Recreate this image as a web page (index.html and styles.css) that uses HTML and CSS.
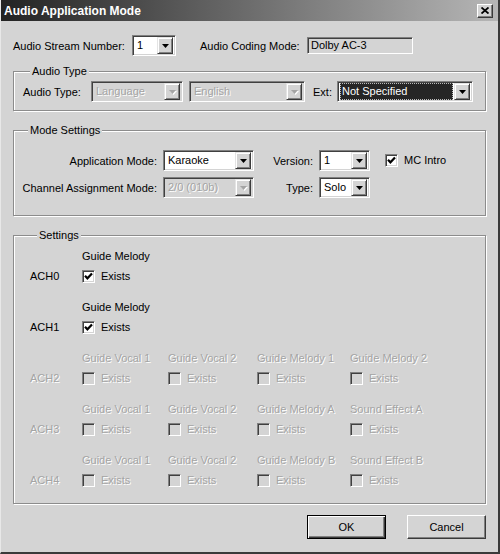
FILE: index.html
```html
<!DOCTYPE html>
<html lang="en">
<head>
    <meta charset="UTF-8">
    <title>Audio Application Mode</title>
    <link rel="stylesheet" href="styles.css">
</head>
<body>
<div class="window">
    <div class="titlebar">
        <span class="title">Audio Application Mode</span>
        <button class="close-btn">
            <svg width="8" height="7" viewBox="0 0 8 7"><path d="M0.5 0.5L7.5 6.5M7.5 0.5L0.5 6.5" stroke="#000" stroke-width="1.8" fill="none"/></svg>
        </button>
    </div>
    <div class="content">
        <div class="row top-row">
            <label class="lbl w-stream">Audio Stream Number:</label>
            <div class="combo w-44">
                <span class="combo-text">1</span>
                <span class="drop"><svg width="7" height="4" viewBox="0 0 7 4"><path d="M0 0h7L3.5 4z"/></svg></span>
            </div>
            <label class="lbl w-coding">Audio Coding Mode:</label>
            <div class="edit">Dolby AC-3</div>
        </div>

        <div class="group group-audio">
            <div class="group-title">Audio Type</div>
            <div class="row audio-row">
                <label class="lbl w-atype">Audio Type:</label>
                <div class="combo disabled w-lang">
                    <span class="combo-text">Language</span>
                    <span class="drop"><svg width="7" height="4" viewBox="0 0 7 4"><path d="M0 0h7L3.5 4z"/></svg></span>
                </div>
                <div class="combo disabled w-eng">
                    <span class="combo-text">English</span>
                    <span class="drop"><svg width="7" height="4" viewBox="0 0 7 4"><path d="M0 0h7L3.5 4z"/></svg></span>
                </div>
                <label class="lbl w-ext">Ext:</label>
                <div class="combo w-ext-combo">
                    <span class="combo-text selected">Not Specified</span>
                    <span class="drop"><svg width="7" height="4" viewBox="0 0 7 4"><path d="M0 0h7L3.5 4z"/></svg></span>
                </div>
            </div>
        </div>

        <div class="group group-mode">
            <div class="group-title">Mode Settings</div>
            <div class="row mode-row first">
                <label class="lbl right w-mode">Application Mode:</label>
                <div class="combo w-app">
                    <span class="combo-text">Karaoke</span>
                    <span class="drop"><svg width="7" height="4" viewBox="0 0 7 4"><path d="M0 0h7L3.5 4z"/></svg></span>
                </div>
                <label class="lbl right w-ver">Version:</label>
                <div class="combo w-small">
                    <span class="combo-text">1</span>
                    <span class="drop"><svg width="7" height="4" viewBox="0 0 7 4"><path d="M0 0h7L3.5 4z"/></svg></span>
                </div>
                <span class="checkbox mc-check">
                    <svg width="9" height="9" viewBox="0 0 9 9"><path d="M1 3.8L3.4 6.3L8 1.6" stroke="#000" stroke-width="2.2" fill="none"/></svg>
                </span>
                <span class="check-label">MC Intro</span>
            </div>
            <div class="row mode-row">
                <label class="lbl right w-mode">Channel Assignment Mode:</label>
                <div class="combo disabled w-app">
                    <span class="combo-text">2/0 (010b)</span>
                    <span class="drop"><svg width="7" height="4" viewBox="0 0 7 4"><path d="M0 0h7L3.5 4z"/></svg></span>
                </div>
                <label class="lbl right w-ver">Type:</label>
                <div class="combo w-small">
                    <span class="combo-text">Solo</span>
                    <span class="drop"><svg width="7" height="4" viewBox="0 0 7 4"><path d="M0 0h7L3.5 4z"/></svg></span>
                </div>
            </div>
        </div>

        <div class="group group-settings">
            <div class="group-title">Settings</div>
            <div class="ach-grid">
                <span class="ach">ACH0</span>
                <div class="cell">
                    <div class="cell-name">Guide Melody</div>
                    <div class="check-row"><span class="checkbox"><svg width="9" height="9" viewBox="0 0 9 9"><path d="M1 3.8L3.4 6.3L8 1.6" stroke="#000" stroke-width="2.2" fill="none"/></svg></span><span class="check-label">Exists</span></div>
                </div>
                <div></div><div></div><div></div>

                <span class="ach">ACH1</span>
                <div class="cell">
                    <div class="cell-name">Guide Melody</div>
                    <div class="check-row"><span class="checkbox"><svg width="9" height="9" viewBox="0 0 9 9"><path d="M1 3.8L3.4 6.3L8 1.6" stroke="#000" stroke-width="2.2" fill="none"/></svg></span><span class="check-label">Exists</span></div>
                </div>
                <div></div><div></div><div></div>

                <span class="ach off">ACH2</span>
                <div class="cell off">
                    <div class="cell-name">Guide Vocal 1</div>
                    <div class="check-row"><span class="checkbox"></span><span class="check-label">Exists</span></div>
                </div>
                <div class="cell off">
                    <div class="cell-name">Guide Vocal 2</div>
                    <div class="check-row"><span class="checkbox"></span><span class="check-label">Exists</span></div>
                </div>
                <div class="cell off">
                    <div class="cell-name">Guide Melody 1</div>
                    <div class="check-row"><span class="checkbox"></span><span class="check-label">Exists</span></div>
                </div>
                <div class="cell off">
                    <div class="cell-name">Guide Melody 2</div>
                    <div class="check-row"><span class="checkbox"></span><span class="check-label">Exists</span></div>
                </div>

                <span class="ach off">ACH3</span>
                <div class="cell off">
                    <div class="cell-name">Guide Vocal 1</div>
                    <div class="check-row"><span class="checkbox"></span><span class="check-label">Exists</span></div>
                </div>
                <div class="cell off">
                    <div class="cell-name">Guide Vocal 2</div>
                    <div class="check-row"><span class="checkbox"></span><span class="check-label">Exists</span></div>
                </div>
                <div class="cell off">
                    <div class="cell-name">Guide Melody A</div>
                    <div class="check-row"><span class="checkbox"></span><span class="check-label">Exists</span></div>
                </div>
                <div class="cell off">
                    <div class="cell-name">Sound Effect A</div>
                    <div class="check-row"><span class="checkbox"></span><span class="check-label">Exists</span></div>
                </div>

                <span class="ach off">ACH4</span>
                <div class="cell off">
                    <div class="cell-name">Guide Vocal 1</div>
                    <div class="check-row"><span class="checkbox"></span><span class="check-label">Exists</span></div>
                </div>
                <div class="cell off">
                    <div class="cell-name">Guide Vocal 2</div>
                    <div class="check-row"><span class="checkbox"></span><span class="check-label">Exists</span></div>
                </div>
                <div class="cell off">
                    <div class="cell-name">Guide Melody B</div>
                    <div class="check-row"><span class="checkbox"></span><span class="check-label">Exists</span></div>
                </div>
                <div class="cell off">
                    <div class="cell-name">Sound Effect B</div>
                    <div class="check-row"><span class="checkbox"></span><span class="check-label">Exists</span></div>
                </div>
            </div>
        </div>

        <div class="row buttons">
            <button class="btn btn-default">OK</button>
            <button class="btn">Cancel</button>
        </div>
    </div>
</div>
</body>
</html>
```

FILE: styles.css
```css
body {
    margin: 0;
    font-family: "Liberation Sans", Arial, sans-serif;
    font-size: 11px;
    color: #000;
    background: #d4d4d4;
}

.window {
    width: 500px;
    height: 554px;
    box-sizing: border-box;
    background: #d4d4d4;
    border-left: 1px solid #e8e8e8;
    border-right: 2px solid #3a3a3a;
    border-bottom: 2px solid #3a3a3a;
    display: flex;
    flex-direction: column;
}

.titlebar {
    height: 21px;
    box-sizing: border-box;
    display: flex;
    align-items: center;
    justify-content: space-between;
    padding: 0 5px 0 3px;
    background: linear-gradient(to right, #232323, #b6b6b6);
}

.title {
    color: #fff;
    font-weight: bold;
    font-size: 12px;
}

.close-btn {
    width: 16px;
    height: 14px;
    padding: 0;
    box-sizing: border-box;
    background: #d4d4d4;
    border: 1px solid;
    border-color: #fff #3a3a3a #3a3a3a #fff;
    box-shadow: inset -1px -1px 0 #808080;
    display: flex;
    align-items: center;
    justify-content: center;
}

.content {
    flex: 1;
    padding: 14px 12px 0 12px;
    display: flex;
    flex-direction: column;
}

.row {
    display: flex;
    align-items: center;
}

.top-row {
    height: 21px;
}

.lbl {
    white-space: nowrap;
}

.right {
    text-align: right;
    margin-right: 6px;
}

.w-stream { width: 119px; }
.w-coding { width: 107px; margin-left: 24px; }
.w-atype { width: 68px; }
.w-ext { width: 24px; margin-left: 8px; }
.w-mode { width: 136px; }
.w-ver { width: 59px; }

/* combo boxes */
.combo {
    height: 21px;
    box-sizing: border-box;
    padding: 2px;
    border: 1px solid;
    border-color: #808080 #fff #fff #808080;
    box-shadow: inset 1px 1px 0 #404040, inset -1px -1px 0 #d4d4d4;
    background: #fff;
    display: flex;
    align-items: center;
}

.w-44 { width: 44px; }
.w-lang { width: 92px; }
.w-eng { width: 116px; margin-left: 6px; }
.w-ext-combo { width: 136px; }
.w-app { width: 91px; }
.w-small { width: 51px; }

.combo-text {
    flex: 1;
    height: 17px;
    line-height: 17px;
    padding-left: 2px;
    white-space: nowrap;
    overflow: hidden;
}

.combo-text.selected {
    background: #262626;
    color: #fff;
    outline: 1px dotted #bbb;
    outline-offset: -1px;
    margin-right: 1px;
}

.drop {
    width: 16px;
    height: 17px;
    box-sizing: border-box;
    background: #d4d4d4;
    border: 1px solid;
    border-color: #e4e4e4 #3a3a3a #3a3a3a #e4e4e4;
    box-shadow: inset 1px 1px 0 #fff, inset -1px -1px 0 #808080;
    display: flex;
    align-items: center;
    justify-content: center;
}

.drop svg {
    fill: #000;
}

.combo.disabled {
    background: #d4d4d4;
}

.combo.disabled .combo-text {
    color: #a4a4a4;
    text-shadow: 1px 1px 0 #fff;
}

.combo.disabled .drop svg {
    fill: #a4a4a4;
    filter: drop-shadow(1px 1px 0 #fff);
}

.edit {
    width: 106px;
    height: 17px;
    box-sizing: border-box;
    padding-left: 3px;
    line-height: 15px;
    border: 1px solid;
    border-color: #808080 #fff #fff #808080;
    box-shadow: inset 1px 1px 0 #404040, inset -1px -1px 0 #d4d4d4;
    background: #d4d4d4;
}

/* group boxes */
.group {
    border: 1px solid #8c8c8c;
    box-shadow: inset 1px 1px 0 #fff, 1px 1px 0 #fff;
}

.group-title {
    width: fit-content;
    height: 13px;
    line-height: 13px;
    margin: -7px 0 0 7px;
    padding: 0 2px;
    background: #d4d4d4;
}

.group-audio {
    margin-top: 15px;
    padding: 0 0 8px 9px;
}

.audio-row {
    margin-top: 3px;
    height: 21px;
}

.group-mode {
    margin-top: 19px;
    padding: 0 0 17px 7px;
}

.mode-row {
    height: 21px;
    margin-top: 6px;
}

.mode-row.first {
    margin-top: 13px;
}

/* checkboxes */
.checkbox {
    width: 13px;
    height: 13px;
    box-sizing: border-box;
    border: 1px solid;
    border-color: #808080 #fff #fff #808080;
    box-shadow: inset 1px 1px 0 #404040, inset -1px -1px 0 #d4d4d4;
    background: #fff;
    display: flex;
    align-items: center;
    justify-content: center;
    flex: none;
}

.check-label {
    margin-left: 6px;
    line-height: 13px;
}

.mc-check {
    margin-left: 15px;
}

.group-settings {
    margin-top: 19px;
    padding: 0 0 16px 16px;
}

.ach-grid {
    margin-top: 8px;
    display: grid;
    grid-template-columns: 52px 86px 89px 93px auto;
    grid-auto-rows: 33px;
    row-gap: 18px;
}

.ach {
    align-self: end;
    line-height: 13px;
}

.cell-name {
    line-height: 13px;
    white-space: nowrap;
}

.check-row {
    margin-top: 7px;
    display: flex;
    align-items: center;
    height: 13px;
}

.off {
    color: #a4a4a4;
    text-shadow: 1px 1px 0 #fff;
}

.off .checkbox {
    background: #d4d4d4;
}

/* buttons */
.buttons {
    margin-top: 11px;
    justify-content: flex-end;
    gap: 21px;
}

.btn {
    width: 79px;
    height: 24px;
    padding: 0;
    box-sizing: border-box;
    font-family: "Liberation Sans", Arial, sans-serif;
    font-size: 11px;
    color: #000;
    background: #d4d4d4;
    border: 1px solid;
    border-color: #fff #3a3a3a #3a3a3a #fff;
    box-shadow: inset -1px -1px 0 #808080;
}

.btn-default {
    border: 1px solid #000;
    box-shadow: inset 1px 1px 0 #fff, inset -1px -1px 0 #3a3a3a, inset -2px -2px 0 #808080;
}
```
